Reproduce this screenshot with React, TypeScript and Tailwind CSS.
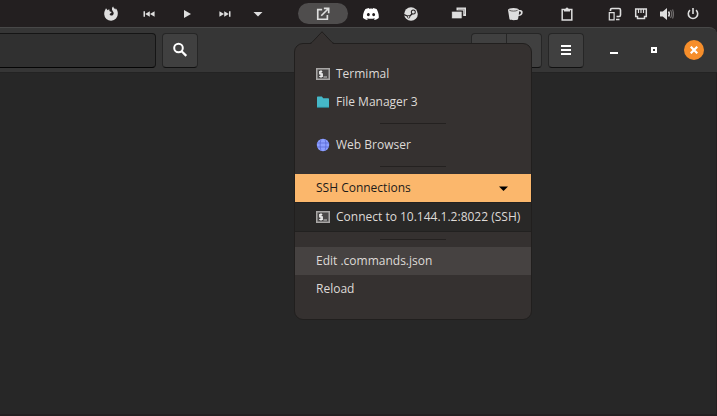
import type { ReactNode } from 'react';

function Icon({ children, className = 'size-4', box = '0 0 16 16' }: { children: ReactNode; className?: string; box?: string }) {
  return (
    <svg viewBox={box} className={className} fill="currentColor" aria-hidden="true">
      {children}
    </svg>
  );
}

function PanelButton({ label, className = 'w-9', children }: { label: string; className?: string; children: ReactNode }) {
  return (
    <button type="button" aria-label={label} className={`flex h-full shrink-0 items-center justify-center ${className}`}>
      {children}
    </button>
  );
}

function TerminalIcon() {
  return (
    <Icon className="h-3 w-3.5 shrink-0" box="0 0 14 12">
      <rect x="0.75" y="0.75" width="12.5" height="10.5" fill="#4a4848" stroke="#a9a7a6" strokeWidth="1.5" />
      <path d="M6.300 3.500H3.700v2.300h2.600v2.700H3.200M5 2.200v7.600" fill="none" stroke="#eeeeee" strokeWidth="1.200" />
      <path d="M7.500 9h3.500" stroke="#c8c8c8" strokeWidth="1" />
    </Icon>
  );
}

function FolderIcon() {
  return (
    <Icon className="h-3 w-3.5 shrink-0" box="0 0 14 12">
      <path d="M1 1.2Q1 .5 1.7.5h4.2l1.3 1.7h5.1q.7 0 .7.7v8.4H1z" fill="#45b8c8" />
      <path d="M1 11.4h12" stroke="#2c7f8b" strokeWidth="1" />
    </Icon>
  );
}

function GlobeIcon() {
  return (
    <Icon className="size-3.5 shrink-0" box="0 0 14 14">
      <circle cx="7" cy="7" r="6.200" fill="#8c9eff" />
      <path d="M5 1.500C3.800 4.500 3.800 9.500 5 12.500M9 1.500c1.200 3 1.200 8 0 11M1 5h12M1 9h12" fill="none" stroke="#5563d0" strokeWidth="0.700" />
    </Icon>
  );
}

function MenuItem({ icon, children, className = 'text-[#dedad7]' }: { icon?: ReactNode; children: ReactNode; className?: string }) {
  return (
    <button type="button" role="menuitem" className={`flex h-7 w-full items-center gap-1.5 px-[21px] text-left whitespace-nowrap ${className}`}>
      {icon}
      {children}
    </button>
  );
}

function Separator() {
  return (
    <div role="separator" className="flex h-[15px] items-center justify-center">
      <div className="h-px w-[66px] bg-[#242120]" />
    </div>
  );
}

function CommandMenu() {
  return (
    <div role="menu" className="absolute top-10 -left-1 w-[238px] rounded-[9px] border border-[#211f1e] bg-[#353130] py-4 text-xs">
      <svg viewBox="0 0 26 13" className="absolute -top-[13px] left-[14px] h-[13px] w-[26px]" aria-hidden="true">
        <path d="M0 13C2 13 2 12.5 3 11.5L13 .8l10 10.700C24 12.500 24 13 26 13z" fill="#353130" />
        <path d="M1 12.300Q2 12.300 3 11.300L13 .8l10 10.500q1 1 2 1" fill="none" stroke="#211f1e" />
      </svg>
      <MenuItem icon={<TerminalIcon />}>Termimal</MenuItem>
      <MenuItem icon={<FolderIcon />}>File Manager 3</MenuItem>
      <Separator />
      <MenuItem icon={<GlobeIcon />}>Web Browser</MenuItem>
      <Separator />
      <MenuItem className="bg-[#fbb76c] text-[#1b1b1b]">
        <span className="flex-1">SSH Connections</span>
        <Icon className="h-1.5 w-3" box="0 0 12 6">
          <path d="M1 1.500h9L5.500 6z" fill="#000000" />
        </Icon>
      </MenuItem>
      <div className="border-y border-[#222120] bg-[#292827]">
        <MenuItem icon={<TerminalIcon />}>Connect to 10.144.1.2:8022 (SSH)</MenuItem>
      </div>
      <Separator />
      <MenuItem className="bg-[#464241] text-[#dedad7]">Edit .commands.json</MenuItem>
      <MenuItem>Reload</MenuItem>
    </div>
  );
}

function TopPanel() {
  return (
    <nav aria-label="Panel" className="relative z-10 flex h-[27px] items-center justify-end bg-[#231f20] pr-[11px] text-[#dedede]">
      <div className="flex h-full gap-1.5">
        <PanelButton label="Firefox" className="w-8">
          <Icon>
            <path d="M3 2.300L4.600 4.200C5.300 3.700 5.900 3.600 6.600 3.600 6.200 4.200 6.300 5 7 5.500L8.600 6C8.400 7.200 7.200 7.200 6.600 8.200 7.200 10.300 10.600 10 10.700 7.300 10.700 5.600 9.300 5 9 3.700 8.800 2.400 9.300 1.300 10.200.6 10.400 2.100 11.700 2.600 12.400 3.400L12.800 2.200C14.200 3.700 15 5.500 14.800 7.700A6.800 6.800 0 0 1 1.200 8.300C1.100 5.800 2 4.200 3 2.300z" />
          </Icon>
        </PanelButton>
        <PanelButton label="Previous track" className="w-8">
          <Icon className="h-1.5 w-3" box="0 0 12 6">
            <path d="M.5.2h1.500v5.600H.5zM6.800.2v5.600L2.200 3zM11.600.2v5.600L7 3z" />
          </Icon>
        </PanelButton>
        <PanelButton label="Play" className="w-8">
          <Icon className="size-2" box="0 0 8 8">
            <path d="M1 0l7 4-7 4z" />
          </Icon>
        </PanelButton>
        <PanelButton label="Next track" className="w-8">
          <Icon className="h-1.5 w-3" box="0 0 12 6">
            <path d="M10 .2h1.500v5.600H10zM5.200.2v5.600L9.800 3zM.4.2v5.600L5 3z" />
          </Icon>
        </PanelButton>
      </div>
      <PanelButton label="Player menu" className="w-[34px]">
        <Icon className="h-1.5 w-3" box="0 0 12 6">
          <path d="M1.500 1h9L6 5.500z" />
        </Icon>
      </PanelButton>
      <div className="relative ml-[23px]">
        <button type="button" aria-label="Commands" aria-expanded="true" className="flex h-[21px] w-[50px] items-center justify-center rounded-full bg-[#4f4d4d]">
          <Icon className="size-3.5">
            <path d="M7 3H2v11h11V9M9 1.500h5.500V7M14.300 1.700L6 10" fill="none" stroke="currentColor" strokeWidth="1.900" />
          </Icon>
        </button>
        <CommandMenu />
      </div>
      <div className="ml-[5px] flex h-full gap-1">
        <PanelButton label="Discord">
          <Icon box="0 0 24 24" className="size-4 text-white">
            <path d="M20.317 4.370a19.800 19.800 0 0 0-4.885-1.515c-.25.400-.46.850-.64 1.250a18.300 18.300 0 0 0-5.500 0c-.2-.45-.41-.87-.63-1.250A19.700 19.700 0 0 0 3.677 4.370C.533 9.046-.32 13.580.1 18.058a19.900 19.900 0 0 0 6 3.030c.46-.63.870-1.295 1.226-1.994a13 13 0 0 1-1.872-.892l.37-.29c3.930 1.793 8.180 1.793 12.060 0l.37.290c-.6.350-1.220.645-1.873.892.360.700.770 1.360 1.225 1.993a19.800 19.800 0 0 0 6-3.030c.5-5.180-.84-9.670-3.290-13.687zM8.020 15.330c-1.180 0-2.157-1.085-2.157-2.419s.96-2.419 2.157-2.419 2.180 1.090 2.157 2.419c0 1.334-.96 2.419-2.157 2.419zm7.975 0c-1.180 0-2.157-1.085-2.157-2.419s.955-2.419 2.157-2.419 2.176 1.090 2.157 2.419c0 1.334-.946 2.419-2.157 2.419z" />
          </Icon>
        </PanelButton>
        <PanelButton label="Steam">
          <Icon className="size-3.5" box="0 0 14 14">
            <circle cx="7" cy="7" r="6.800" />
            <path d="M0 7.600l5 2.200L8.500 6.500" fill="none" stroke="#231f20" strokeWidth="1.300" />
            <circle cx="9.300" cy="5" r="2.500" fill="#231f20" />
            <circle cx="9.300" cy="5" r="1.500" />
            <circle cx="4.700" cy="9.800" r="1.600" fill="#231f20" />
            <circle cx="4.600" cy="9.900" r="0.900" />
          </Icon>
        </PanelButton>
      </div>
      <PanelButton label="Windows" className="ml-3 w-9">
        <Icon>
          <path d="M5.500 1.500H15v8.500h-2.800V4.500H5.500z" fill="#dedede" />
          <path d="M7 3.300h6.300v4.800" fill="none" stroke="#8f8d8d" strokeWidth=".7" />
          <rect x=".6" y="5.200" width="10.500" height="7.600" rx="1" stroke="#231f20" strokeWidth=".8" />
        </Icon>
      </PanelButton>
      <div className="ml-5 flex h-full gap-4">
        <PanelButton label="Caffeine">
          <Icon>
            <path d="M1 4c0-2.700 11-2.700 11 0 3.600-.3 4 1.500 3.500 3.500-.4 1.500-1.800 2.300-3.900 2.500L11 13.300c-1.500 1.200-7 1.200-8.500 0zm10.800 4.700c2.700-.3 2.900-3.500.4-3.500z" />
            <path d="M2.300 4.200c1.700 1.200 6.700 1.200 8.400 0" fill="none" stroke="#55504f" strokeWidth=".9" />
          </Icon>
        </PanelButton>
        <PanelButton label="Clipboard">
          <Icon className="size-3.5" box="0 0 14 14">
            <path d="M2.200 2.500h9.600v10.500H2.200z" fill="none" stroke="currentColor" strokeWidth="1.500" />
            <path d="M4 2h1.500a1.500 1.500 0 0 1 3 0H10v2.500H4z" />
          </Icon>
        </PanelButton>
      </div>
      <div className="ml-[17px] flex h-full">
        <PanelButton label="Devices" className="w-[26px]">
          <Icon className="size-3.5" box="0 0 14 14">
            <path d="M2.500 4V2.900q0-1.400 1.400-1.400h7.200q1.400 0 1.400 1.400v5.200q0 1.400-1.400 1.400H8.500M8 12.500h3.500" fill="none" stroke="currentColor" strokeWidth="1.600" />
            <path d="M1.300 5.600h4.800v7.200H1.300z" fill="none" stroke="currentColor" strokeWidth="1.200" />
          </Icon>
        </PanelButton>
        <PanelButton label="Wired network" className="w-[26px]">
          <Icon className="size-3.5" box="0 0 14 14">
            <path d="M1.700 2h10.600v7.500H10.500v2h-7v-2H1.700z" fill="none" stroke="currentColor" strokeWidth="1.500" />
            <path d="M4.500 2v4M7 2v4M9.500 2v4" stroke="currentColor" strokeWidth="1.200" />
          </Icon>
        </PanelButton>
        <PanelButton label="Volume" className="w-[26px]">
          <Icon className="size-3.5" box="0 0 14 14">
            <path d="M0 4.500h2.800L7 1v12L2.800 9.500H0z" />
            <path d="M8.500 4.500q1.700 2.500 0 5" fill="none" stroke="currentColor" strokeWidth="1.500" />
            <path d="M10.500 3q2.500 4 0 8M12.500 2.500q2 4.500 0 9" fill="none" stroke="#6d6a6a" strokeWidth="1.200" />
          </Icon>
        </PanelButton>
        <PanelButton label="Power" className="w-[26px]">
          <Icon className="size-3.5" box="0 0 14 14">
            <path d="M4 3.200a4.700 4.700 0 1 0 6 0M7 1v6" fill="none" stroke="currentColor" strokeWidth="1.600" />
          </Icon>
        </PanelButton>
      </div>
    </nav>
  );
}

const raised = 'flex h-[35px] items-center justify-center border border-[#262626] border-b-[#111111] bg-[#404040]';

function TitleBar() {
  return (
    <header className="flex h-[46px] items-center rounded-tr-lg border-t border-b border-t-[#484848] border-b-[#232323] bg-[#363636] pr-[13px] text-white">
      <input type="text" aria-label="Location" className="h-[35px] w-[156px] rounded-r border border-l-0 border-[#151515] border-b-[#050505] bg-[#303030] px-2 text-xs outline-none" />
      <button type="button" aria-label="Search" className={`ml-1.5 w-9 rounded ${raised}`}>
        <Icon>
          <circle cx="6.500" cy="6" r="4.300" fill="none" stroke="currentColor" strokeWidth="2" />
          <path d="M9.600 9.200l4.700 4.700" stroke="currentColor" strokeWidth="2.200" />
        </Icon>
      </button>
      <div className="ml-auto flex">
        <button type="button" aria-label="List view" className={`w-9 rounded-l ${raised}`} />
        <button type="button" aria-label="View options" className={`-ml-px w-9 rounded-r ${raised}`} />
      </div>
      <button type="button" aria-label="Main menu" className={`ml-1.5 w-9 rounded ${raised}`}>
        <Icon className="size-2.5" box="0 0 10 10">
          <path d="M0 0h10v2H0zM0 4h10v2H0zM0 8h10v2H0z" />
        </Icon>
      </button>
      <div className="ml-5 flex gap-5">
        <button type="button" aria-label="Minimize" className="flex size-5 items-center justify-center">
          <Icon className="size-2" box="0 0 8 8">
            <path d="M0 6h8v2H0z" />
          </Icon>
        </button>
        <button type="button" aria-label="Maximize" className="flex size-5 items-center justify-center">
          <Icon className="size-1.5" box="0 0 6 6">
            <path d="M0 0h6v6H0zM2 2v2h2V2z" fillRule="evenodd" />
          </Icon>
        </button>
        <button type="button" aria-label="Close" className="flex size-5 items-center justify-center rounded-full bg-[#f68e2b]">
          <Icon className="size-2" box="0 0 8 8">
            <path d="M.7.7l6.600 6.600M7.300.7L.7 7.300" stroke="currentColor" strokeWidth="2.200" />
          </Icon>
        </button>
      </div>
    </header>
  );
}

export default function App() {
  return (
    <div className="flex min-h-screen flex-col bg-[#231f20] pb-0.5 font-['Open_Sans','Noto_Sans',sans-serif]">
      <TopPanel />
      <TitleBar />
      <main className="mr-px flex-1 bg-[#272727]" />
    </div>
  );
}
